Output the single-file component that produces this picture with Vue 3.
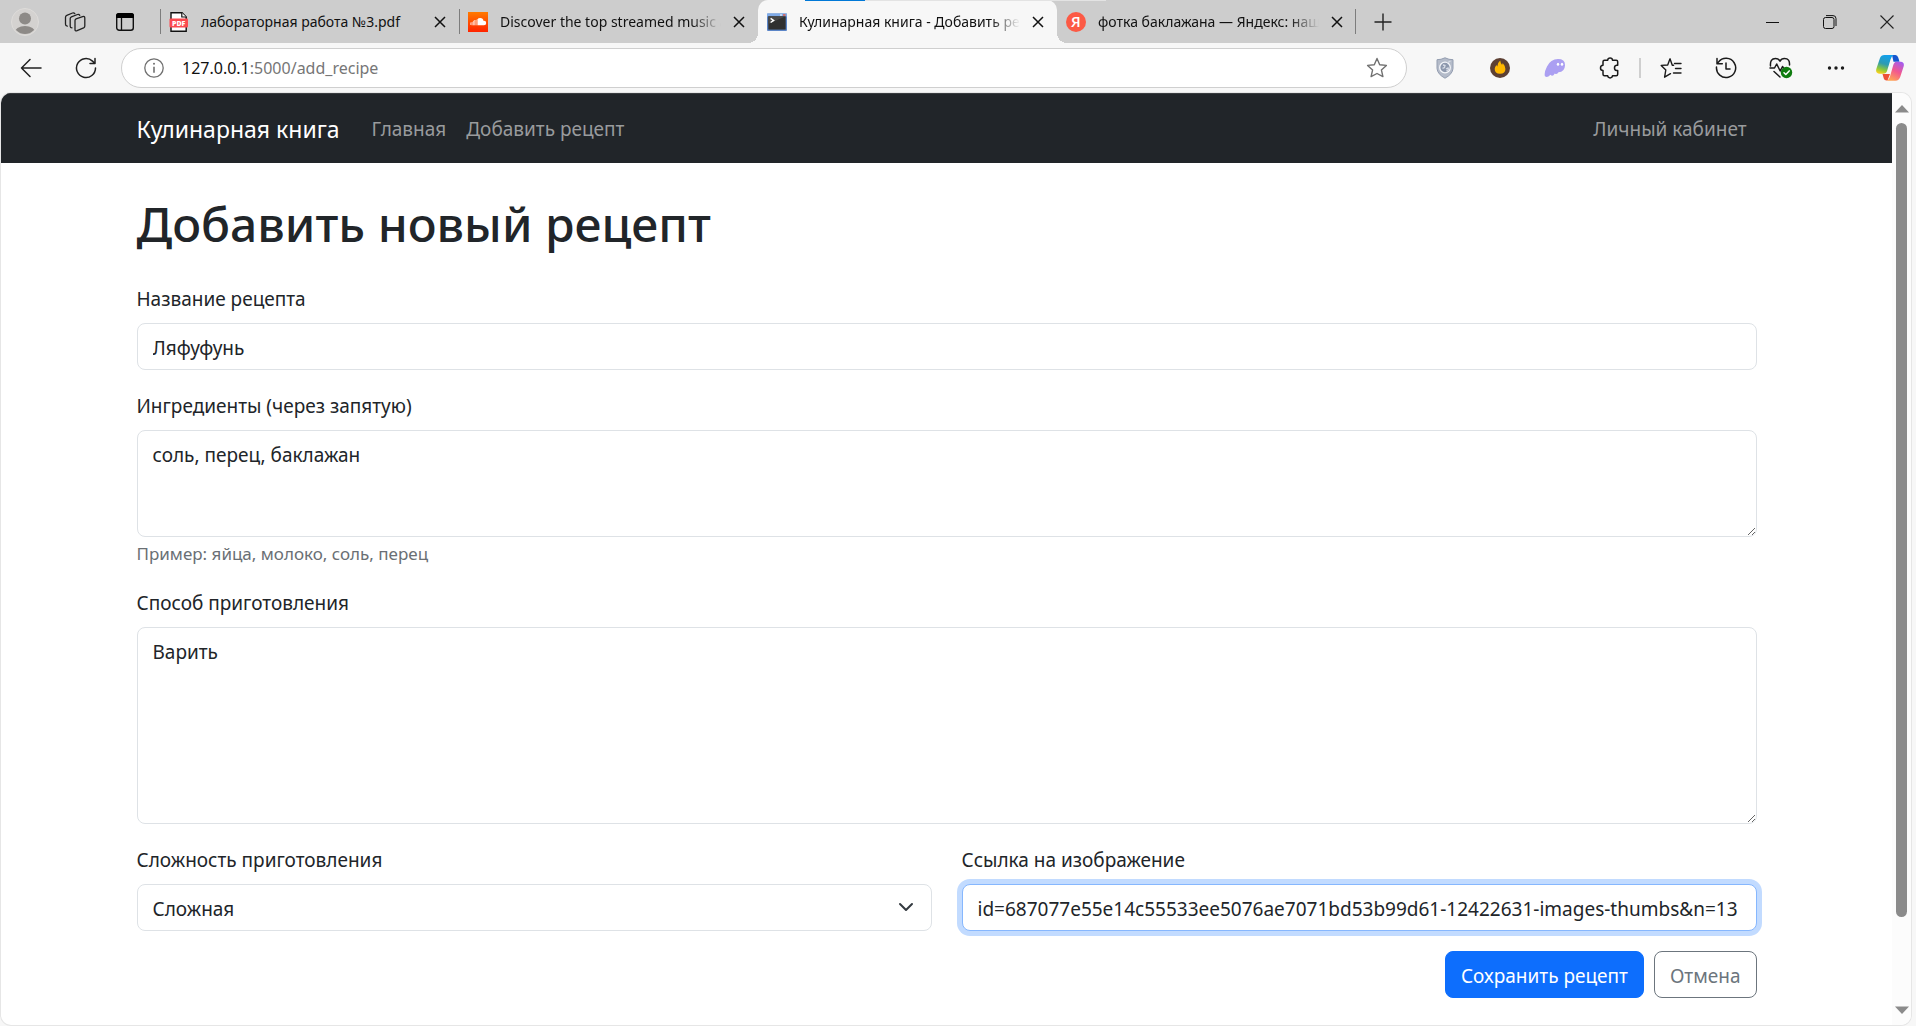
<script setup>
import { ref } from 'vue'

const tabs = [
  { id: 'pdf', title: 'лабораторная работа №3.pdf', active: false },
  { id: 'cloud', title: 'Discover the top streamed music and songs', active: false },
  { id: 'console', title: 'Кулинарная книга - Добавить рецепт', active: true },
  { id: 'yandex', title: 'фотка баклажана — Яндекс: нашлось', active: false },
]

const name = ref('Ляфуфунь')
const ingredients = ref('соль, перец, баклажан')
const method = ref('Варить')
const difficulty = ref('hard')
const image = ref('id=687077e55e14c55533ee5076ae7071bd53b99d61-12422631-images-thumbs&n=13')
</script>

<template>
  <div class="window">
    <header class="tabstrip">
      <div class="stripe"><i></i></div>
      <div class="lead">
        <button class="icon-btn" aria-label="Профиль">
          <svg width="28" height="28" viewBox="0 0 28 28">
            <defs><clipPath id="av"><circle cx="14" cy="14" r="12" /></clipPath></defs>
            <circle cx="14" cy="14" r="13.5" fill="#d4d2d0" stroke="#dedcda" />
            <g fill="#8d8a87" clip-path="url(#av)"><circle cx="14" cy="10.500" r="6" /><ellipse cx="14" cy="25" rx="10.500" ry="7" /></g>
          </svg>
        </button>
        <button class="icon-btn" aria-label="Рабочие области">
          <svg width="22" height="22" viewBox="0 0 22 22" fill="none" stroke="#222" stroke-width="1.300" stroke-linejoin="round" stroke-linecap="round">
            <path d="M11 9.500q0-1.200 1.100-1.700l6.500-2.200q2.200-.6 2.200 1.300v8q0 1.300-1.200 1.900l-6.500 2.900q-2.100.7-2.100-1.300z" />
            <path d="M8 16.800q-1.800 0-1.800-1.600V7.600q0-1.300 1.200-1.800l6.100-2.300q1.500-.5 2.300.8" />
            <path d="M3.300 15.200q-1.800-.2-1.800-1.900V6.200q0-1.400 1.300-1.900L8.500 2q1.500-.5 2.300.6" />
          </svg>
        </button>
        <button class="icon-btn" aria-label="Меню вкладок">
          <svg width="20" height="20" viewBox="0 0 20 20">
            <rect x="1.700" y="1.700" width="16.600" height="16.600" rx="2.500" fill="none" stroke="#111" stroke-width="1.400" />
            <path d="M1 6V3.500Q1 1 3.500 1h13Q19 1 19 3.500V6z" fill="#000" /><path d="M6.500 6v12" stroke="#111" stroke-width="1.300" />
          </svg>
        </button>
      </div>

      <div v-for="tab in tabs" :key="tab.id" class="tab" :class="{ active: tab.active, last: tab.id === 'yandex' }">
        <svg v-if="tab.id === 'pdf'" class="fav" viewBox="0 0 20 20">
          <path d="M2 .8h11l4.200 4.200v14.200H2z" fill="#fff" stroke="#111" stroke-width="1.400" /><path d="M12.800.8V5h4.400" fill="#fff" stroke="#111" stroke-width="1.200" />
          <rect x=".5" y="6.500" width="18.500" height="9" rx="1" fill="#fb4b50" />
          <text x="9.700" y="13.600" text-anchor="middle" font-size="7" font-weight="800" fill="#fff" font-family="Open Sans, sans-serif">PDF</text>
        </svg>
        <svg v-else-if="tab.id === 'cloud'" class="fav" viewBox="0 0 20 20">
          <defs><linearGradient id="sc" x2="0" y2="1"><stop stop-color="#ff7a00" /><stop offset="1" stop-color="#ff2400" /></linearGradient></defs>
          <rect width="20" height="20" fill="url(#sc)" />
          <path d="M10 13.300V6.600q1-.8 2.300-.7 2.800.2 3.300 3 2.600-.3 2.600 2.200 0 2.200-2.200 2.200z" fill="#fff" />
          <path d="M9.300 13.300V7M8 13.300V8M6.700 13.300V8M5.400 13.300V8.800M4.100 13.300V10M2.800 13V10.500" stroke="#fff" stroke-opacity=".75" stroke-width="1" />
        </svg>
        <svg v-else-if="tab.id === 'console'" class="fav" viewBox="0 0 20 20">
          <rect y="1.500" width="20" height="17.500" rx="1" fill="#5c86c8" /><rect y="1.500" width="20" height="3" fill="#80abe8" />
          <rect x="1.300" y="4.300" width="17.400" height="13.300" fill="#303030" /><path d="M1.300 4.300h17.400L1.300 12z" fill="#484848" />
          <path d="M3.600 6.300l3 2.100-3 2.100" fill="none" stroke="#fff" stroke-width="1.500" />
          <path d="M13 3h2" stroke="#fff" /><path d="M16 3h2.500" stroke="#e45b48" stroke-width="1.500" />
        </svg>
        <svg v-else class="fav" viewBox="0 0 20 20">
          <circle cx="10" cy="10" r="10" fill="#fc5a45" />
          <text x="9.800" y="15.300" text-anchor="middle" font-size="15" font-weight="600" fill="#fff" font-family="Open Sans, sans-serif">Я</text>
        </svg>
        <span class="tab-title" :class="{ fade: tab.id !== 'pdf' }">{{ tab.title }}</span>
        <button class="close" aria-label="Закрыть вкладку">
          <svg width="12" height="12" viewBox="0 0 12 12"><path d="M1 1l10 10M11 1L1 11" stroke="#111" stroke-width="1.500" /></svg>
        </button>
      </div>

      <button class="icon-btn plus" aria-label="Новая вкладка">
        <svg width="18" height="18" viewBox="0 0 18 18"><path d="M9 .5v17M.5 9h17" stroke="#222" stroke-width="1.400" /></svg>
      </button>
      <div class="controls">
        <button aria-label="Свернуть"><svg width="14" height="14" viewBox="0 0 14 14"><path d="M0 7.500h13" stroke="#111" /></svg></button>
        <button aria-label="Восстановить">
          <svg width="14" height="14" viewBox="0 0 14 14" fill="none" stroke="#111"><rect x=".5" y="2.500" width="10.500" height="11" rx="2" /><path d="M3 .6h7q3 0 3 3V11" /></svg>
        </button>
        <button aria-label="Закрыть"><svg width="14" height="14" viewBox="0 0 14 14"><path d="M.5.500l13 13M13.500.500l-13 13" stroke="#222" stroke-width="1.100" /></svg></button>
      </div>
    </header>

    <div class="toolbar">
      <button class="nav-btn" aria-label="Назад">
        <svg width="22" height="20" viewBox="0 0 22 20" fill="none" stroke="#222" stroke-width="1.500" stroke-linecap="round" stroke-linejoin="round"><path d="M21 10H1.500M10 1.500L1.500 10l8.500 8.500" /></svg>
      </button>
      <button class="nav-btn" aria-label="Обновить">
        <svg width="22" height="22" viewBox="0 0 22 22" fill="none" stroke="#222" stroke-width="1.500" stroke-linecap="round" stroke-linejoin="round"><path d="M20.500 11a9.500 9.500 0 1 1-3-6.900l2.500 2.400M20 1.500v5h-5" /></svg>
      </button>
      <div class="address">
        <svg width="20" height="20" viewBox="0 0 20 20" fill="none" stroke="#707070" stroke-width="1.300"><circle cx="10" cy="10" r="9.200" /><path d="M10 8.800v6" stroke-width="1.600" /><circle cx="10" cy="5.800" r="1" fill="#707070" stroke="none" /></svg>
        <a class="url" href="#">127.0.0.1<span>:5000/add_recipe</span></a>
        <button class="icon-btn" aria-label="В избранное">
          <svg width="22" height="22" viewBox="0 0 22 22" fill="none" stroke="#707070" stroke-width="1.400" stroke-linejoin="round"><path d="M11 1.500l2.700 6.200 6.700.7-5 4.500 1.500 6.700-5.900-3.100-5.900 3.100 1.500-6.700-5-4.500 6.700-.7z" /></svg>
        </button>
      </div>
      <div class="tools">
        <button aria-label="Защита">
          <svg width="20" height="22" viewBox="0 0 20 22"><path d="M10 .8q4 2 8 1.900v8.800q-.5 5.800-8 9.700-7.500-3.900-8-9.700V2.700q4 .1 8-1.900z" fill="#b4bbc9" stroke="#939db0" /><circle cx="10" cy="10.500" r="5.300" fill="#8d98ad" stroke="#f4f6fa" stroke-width="1.300" /><path d="M8 8l2 .5-.5 2-2 .8M11 12l2-1 .5 1.500-2 1.500M12 6l3.500-2" stroke="#d7dce6" stroke-width="1.300" fill="none" /></svg>
        </button>
        <button aria-label="Огонь">
          <svg width="22" height="22" viewBox="0 0 22 22"><circle cx="11" cy="11" r="10" fill="#5d4033" /><path d="M11.200 3.500q.3 2.600 1.800 4.200.7-.4.700-1.600 2.700 3 2.700 6 0 4.700-5.400 4.700-5.300 0-5.300-4.700 0-2.200 1.800-4 .2 1 .8 1.300Q8.300 6 11.200 3.500z" fill="#ffb700" /></svg>
        </button>
        <button aria-label="Кошелёк">
          <svg width="22" height="20" viewBox="0 0 22 20"><path d="M1 18.300Q-.3 15 3 8.500 6.500 1.200 14 1q7.300 0 7 6.500-.3 6.500-6.500 6.800-1.500 2.700-3.700 1.200-2.200 3.700-4.300 1.200-3.500 3.700-5.500 1.600z" fill="#ab9ff2" /><ellipse cx="14" cy="6.300" rx="1.200" ry="1.500" fill="#fff" /><ellipse cx="18" cy="6.300" rx="1.200" ry="1.500" fill="#fff" /></svg>
        </button>
        <button aria-label="Расширения">
          <svg width="22" height="22" viewBox="0 0 22 22" fill="none" stroke="#1b1b1b" stroke-width="1.500" stroke-linejoin="round"><path d="M5.500 3.200h3.200q.2-2.100 2.400-2.100t2.400 2.100h3.700q1.500 0 1.500 1.500v3.600h-1.200q-2 .4-2 2.600t2 2.600h1.200v3.800q0 1.500-1.500 1.500h-3.700q-.2 2.100-2.400 2.100t-2.400-2.100H5.500Q4 18.800 4 17.300v-3.800q-2.500-.1-2.500-2.600T4 8.300V4.700q0-1.500 1.500-1.500z" /></svg>
        </button>
        <span class="tool-sep"></span>
        <button aria-label="Избранное">
          <svg width="22" height="22" viewBox="0 0 22 22" fill="none" stroke="#1b1b1b" stroke-width="1.400" stroke-linejoin="round" stroke-linecap="round"><path d="M13.600 8.300h-1.300L10 1.800 7.700 8 1.200 8.400 5.800 13 4.600 20.200l5.900-3.500M14.500 6.500H21M15.500 11.500H21M13.500 16H21" /></svg>
        </button>
        <button aria-label="Журнал">
          <svg width="22" height="22" viewBox="0 0 22 22" fill="none" stroke="#1b1b1b" stroke-width="1.500" stroke-linejoin="round" stroke-linecap="round"><path d="M1.500 10a9.600 9.600 0 1 0 2-5L2 6.800M2 1.500v5.300h5.300M11 6v6h4" /></svg>
        </button>
        <button aria-label="Производительность">
          <svg width="24" height="22" viewBox="0 0 24 22" fill="none" stroke="#1b1b1b" stroke-width="1.500" stroke-linejoin="round" stroke-linecap="round"><path d="M1.500 9Q.8 1.500 6.500 1.500q3.200 0 4.500 2.700Q12.300 1.500 15.500 1.500 21 1.500 20.500 8M1 11h4.500l2.200-4 3.500 7 2.300-4.500 1 1.500M5 14.500l6 5.500" /><circle cx="17.500" cy="15.500" r="5.700" fill="#107c10" stroke="none" /><path d="M15 15.700l1.800 1.800 3.400-3.600" stroke="#fff" /></svg>
        </button>
        <button aria-label="Меню">
          <svg width="20" height="20" viewBox="0 0 20 20" fill="#1b1b1b"><circle cx="3.500" cy="10" r="1.700" /><circle cx="10" cy="10" r="1.700" /><circle cx="16.500" cy="10" r="1.700" /></svg>
        </button>
        <button class="copilot" aria-label="Copilot">
          <svg width="28" height="28" viewBox="0 0 28 28">
            <defs>
              <linearGradient id="ca" x1=".5" x2=".2" y2="1"><stop stop-color="#12a0ec" /><stop offset=".45" stop-color="#2f9bb0" /><stop offset=".75" stop-color="#8dc83b" /><stop offset="1" stop-color="#ffd21c" /></linearGradient>
              <linearGradient id="cb" x1=".8" x2=".3" y2="1"><stop stop-color="#a35cf0" /><stop offset=".5" stop-color="#f2588f" /><stop offset="1" stop-color="#ffa456" /></linearGradient>
            </defs>
            <path d="M16 1h3.500q2 0 2.800 2.700l1.200 4.100h-6z" fill="#1556cf" /><path d="M8 20h6l-2.500 6.500Q8.500 27 7.800 24.500L6.500 20z" fill="#ee5138" />
            <path d="M8.500 1h9q-2 1-3 4.500l-3.300 11Q10.300 19.700 7 19.700H3.800Q-.7 19.700.3 15L4 4Q5 1 8.500 1z" fill="url(#ca)" />
            <path d="M20.300 7.800h4.500q3.800.3 2.900 4.500L24.200 23q-1.200 3.500-4.700 3.700H11q2-.8 3-4.200l3.200-11.200q1-3.500 3.100-3.500z" fill="url(#cb)" />
          </svg>
        </button>
      </div>
    </div>

    <div class="viewport">
      <div class="page">
        <nav class="navbar">
          <div class="container nav-row">
            <a class="brand" href="#">Кулинарная книга</a>
            <a class="nav-link" href="#">Главная</a>
            <a class="nav-link" href="#">Добавить рецепт</a>
            <a class="nav-link account" href="#">Личный кабинет</a>
          </div>
        </nav>
        <main class="container content">
          <h1>Добавить новый рецепт</h1>
          <form @submit.prevent>
            <div class="field">
              <label for="name">Название рецепта</label>
              <input id="name" v-model="name" class="control" type="text" />
            </div>
            <div class="field">
              <label for="ingredients">Ингредиенты (через запятую)</label>
              <textarea id="ingredients" v-model="ingredients" class="control short"></textarea>
              <div class="hint">Пример: яйца, молоко, соль, перец</div>
            </div>
            <div class="field">
              <label for="method">Способ приготовления</label>
              <textarea id="method" v-model="method" class="control tall"></textarea>
            </div>
            <div class="row">
              <div class="field">
                <label for="difficulty">Сложность приготовления</label>
                <div class="select-wrap">
                  <select id="difficulty" v-model="difficulty" class="control">
                    <option value="easy">Лёгкая</option>
                    <option value="medium">Средняя</option>
                    <option value="hard">Сложная</option>
                  </select>
                  <svg class="chevron" width="20" height="20" viewBox="0 0 20 20" fill="none" stroke="#343a40" stroke-width="2" stroke-linecap="round" stroke-linejoin="round"><path d="M3 6l6 6 6-6" /></svg>
                </div>
              </div>
              <div class="field">
                <label for="image">Ссылка на изображение</label>
                <input id="image" v-model="image" class="control focused" type="text" />
              </div>
            </div>
            <div class="actions">
              <button class="btn primary" type="submit">Сохранить рецепт</button>
              <button class="btn outline" type="button">Отмена</button>
            </div>
          </form>
        </main>
      </div>
      <div class="scrollbar">
        <svg width="14" height="8" viewBox="0 0 14 8"><path d="M7 0l7 7.500H0z" fill="#8b8b8b" /></svg>
        <div class="track"><div class="thumb"></div></div>
        <svg width="14" height="8" viewBox="0 0 14 8"><path d="M0 .5h14L7 8z" fill="#8b8b8b" /></svg>
      </div>
    </div>
  </div>
</template>

<style>
body { margin: 0; background: #f7f7f7; }
</style>

<style scoped>
* { box-sizing: border-box; }
.window {
  min-height: 100vh; display: flex; flex-direction: column;
  background: #f7f7f7; color: #212529;
  font-family: "Noto Sans", "Open Sans", sans-serif;
}
button { font: inherit; border: 0; background: none; padding: 0; }
button svg { display: block; }
svg { flex: none; }
a { text-decoration: none; }

.tabstrip { position: relative; display: flex; height: 43px; background: #cdcdcd; }
.stripe { position: absolute; top: 0; left: 805px; width: 301px; height: 1px; background: #e3e3e3; z-index: 1; }
.stripe i { display: block; width: 60px; height: 1px; background: #0078d7; }
.lead { width: 160px; flex: none; display: flex; align-items: center; }
.lead button { width: 50px; display: grid; place-items: center; }
.tab {
  position: relative; flex: 0 1 299px; min-width: 0; display: flex; align-items: center;
  gap: 12px; padding: 0 13px 0 9px; font-size: 14px;
}
.tab:not(.active)::before, .tab.last::after {
  content: ""; position: absolute; left: 0; top: 9px; width: 1px; height: 25px; background: #7d7d7d;
}
.tab.last::after { left: auto; right: 0; }
.tab.active + .tab::before { display: none; }
.tab.active { background: #f7f7f7; border-radius: 10px 10px 0 0; }
.tab.active::before, .tab.active::after {
  content: ""; position: absolute; bottom: 0; width: 10px; height: 10px;
}
.tab.active::before { left: -10px; background: radial-gradient(circle at 0 0, #cdcdcd 10px, #f7f7f7 10px); }
.tab.active::after { right: -10px; background: radial-gradient(circle at 100% 0, #cdcdcd 10px, #f7f7f7 10px); }
.fav { width: 20px; height: 20px; }
.tab-title { flex: 1; min-width: 0; overflow: hidden; white-space: nowrap; line-height: 24px; color: #111; }
.tab-title.fade { mask-image: linear-gradient(to right, #000 calc(100% - 30px), transparent); }
.plus { margin-left: 18px; }
.controls { display: flex; margin: 0 1px 0 auto; }
.controls button { width: 57px; display: grid; place-items: center; }

.toolbar { display: flex; align-items: center; height: 50px; padding-left: 20px; }
.nav-btn { width: 22px; margin-right: 33px; display: grid; place-items: center; }
.address {
  flex: 1; display: flex; align-items: center; height: 40px; margin: 0 10px 0 -9px;
  padding: 0 18px 0 22px; border: 1px solid #cfcfcf; border-radius: 20px; background: #fff;
}
.url { flex: 1; margin-left: 18px; font-size: 16px; color: #111; }
.url span { color: #767676; }
.tools { display: flex; align-items: center; }
.tools button { width: 55px; display: grid; place-items: center; }
.tools .copilot { width: 53px; }
.tool-sep { width: 2px; height: 20px; margin: 0 2px; background: #cfcfcf; }

.viewport {
  flex: 1; display: flex; margin: 0 5px 1px 1px; overflow: hidden;
  background: #fff; border-radius: 10px; box-shadow: 0 0 0 1px #e6e6e6;
}
.page { flex: 1; min-width: 0; padding-bottom: 26px; }
.container { max-width: 1650px; margin: 0 auto; padding: 0 15px; }
.navbar { background: #212529; border-top: 1px solid #3a3d40; }
.nav-row { display: flex; align-items: center; height: 69px; font-size: 19px; }
.brand { margin-right: 22px; font-size: 23px; color: #fff; }
.nav-link { padding: 0 10px; color: #999b9d; }
.account { margin-left: auto; }
.content { padding-top: 30px; }
h1 { margin: 0 0 28px; font-size: 48px; font-weight: 500; line-height: 62px; }
.field { margin-bottom: 20px; font-size: 19px; }
label { display: block; margin-bottom: 8px; line-height: 32px; }
.control {
  display: block; width: 100%; height: 47px; padding: 9px 15px 6px; border: 1px solid #dee2e6;
  border-radius: 8px; outline: 0; background: #fff; color: #212529; font: inherit; line-height: 30px;
}
textarea.control { resize: vertical; }
textarea.short { height: 107px; }
textarea.tall { height: 197px; }
.hint { margin-top: 4px; font-size: 17px; line-height: 26px; color: #6a6f74; }
.row { display: grid; grid-template-columns: 1fr 1fr; gap: 30px; }
.select-wrap { position: relative; }
select.control { appearance: none; }
.chevron { position: absolute; right: 15px; top: 14px; pointer-events: none; }
.focused { border-color: #86b7fe; box-shadow: 0 0 0 5px #c2dbff; }
.actions { display: flex; justify-content: flex-end; gap: 10px; }
.btn { height: 47px; padding: 2px 15px 0; border: 1px solid #0d6efd; border-radius: 8px; font-size: 19px; }
.primary { background: #0d6efd; color: #fff; }
.outline { border-color: #6c757d; color: #6c757d; }

.scrollbar { width: 19px; display: flex; flex-direction: column; align-items: center; gap: 10px; padding: 12px 0 11px; background: #fcfcfc; }
.track { flex: 1; width: 11px; }
.thumb { height: 91%; border-radius: 6px; background: #8b8b8b; }
</style>
